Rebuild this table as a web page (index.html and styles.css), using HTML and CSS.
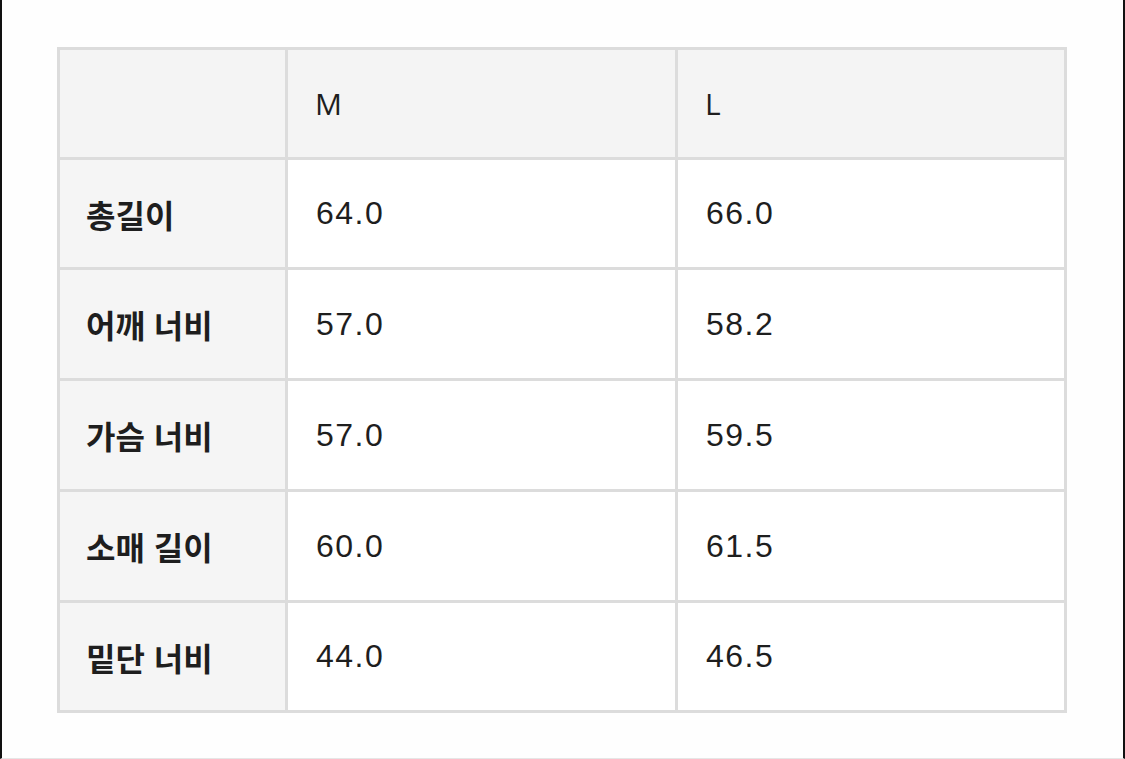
FILE: index.html
```html
<!DOCTYPE html>
<html lang="ko">
<head>
<meta charset="utf-8">
<title>사이즈표</title>
<link rel="stylesheet" href="styles.css">
</head>
<body>
<div class="frame">
  <table class="size-table">
    <colgroup>
      <col class="c-label">
      <col class="c-m">
      <col class="c-l">
    </colgroup>
    <thead>
      <tr class="r-107">
        <th class="corner"></th>
        <th class="head">M</th>
        <th class="head">L</th>
      </tr>
    </thead>
    <tbody>
      <tr class="r-107"><th class="label">총길이</th><td>64.0</td><td>66.0</td></tr>
      <tr class="r-108"><th class="label">어깨 너비</th><td>57.0</td><td>58.2</td></tr>
      <tr class="r-108"><th class="label">가슴 너비</th><td>57.0</td><td>59.5</td></tr>
      <tr class="r-108"><th class="label">소매 길이</th><td>60.0</td><td>61.5</td></tr>
      <tr class="r-107"><th class="label">밑단 너비</th><td>44.0</td><td>46.5</td></tr>
    </tbody>
  </table>
</div>
</body>
</html>
```

FILE: styles.css
```css
html, body {
  margin: 0;
  padding: 0;
  background: #fefefe;
}

.frame {
  box-sizing: border-box;
  width: 1125px;
  height: 759px;
  border-left: 2px solid #111111;
  border-right: 2px solid #111111;
  border-bottom: 1px solid #e6e6e6;
  padding: 47px 0 0 55px;
  background: #fefefe;
}

.size-table {
  border-collapse: separate;
  border-spacing: 3px;
  background: #dcdcdc;
  table-layout: fixed;
  width: 1010px;
  font-family: "Liberation Sans", "Noto Sans CJK KR", sans-serif;
  color: #1e1e1e;
}

.c-label { width: 225px; }
.c-m { width: 387px; }
.c-l { width: 386px; }

.r-107 { height: 107px; }
.r-108 { height: 108px; }

.size-table th,
.size-table td {
  padding: 0 0 0 28px;
  text-align: left;
  vertical-align: middle;
  font-size: 32px;
  letter-spacing: 1.5px;
  font-weight: 400;
  background: #ffffff;
}

.size-table thead th {
  background: #f4f4f4;
}

.size-table .head {
  font-family: "Open Sans", "Liberation Sans", sans-serif;
  font-size: 30px;
  letter-spacing: 0;
  padding-left: 27px;
}

.size-table .label {
  background: #f5f5f5;
  font-family: "Noto Sans CJK KR", sans-serif;
  font-weight: 700;
  font-size: 32px;
  letter-spacing: 0;
  padding-left: 26px;
}
```
